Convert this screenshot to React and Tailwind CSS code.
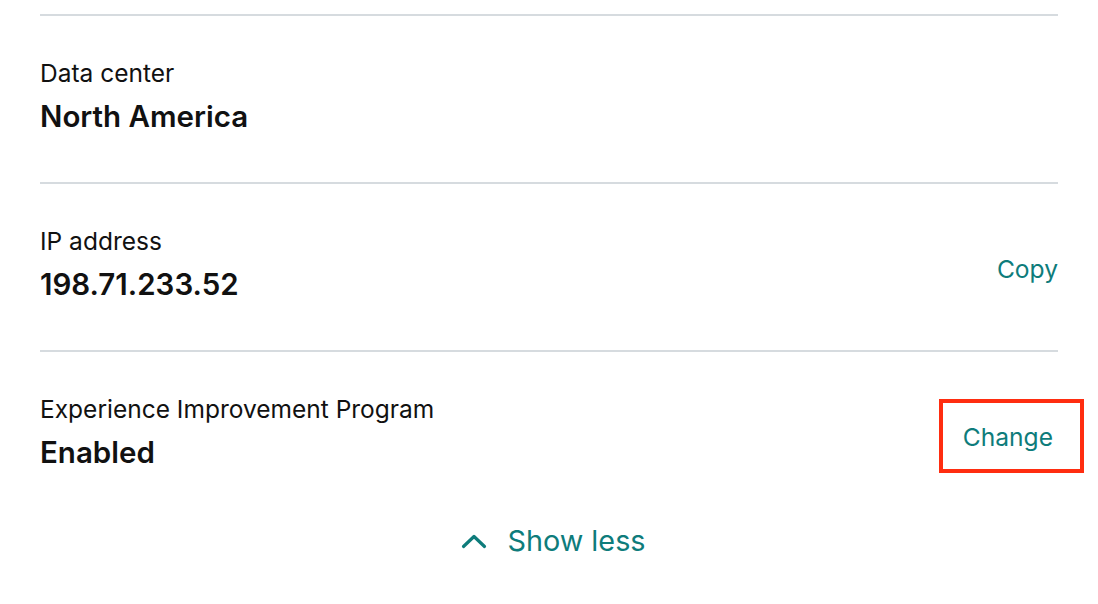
export default function App() {
  const font = { fontFamily: "Inter, 'Liberation Sans', sans-serif" };
  return (
    <div className="w-[1098px] h-[604px] bg-white overflow-hidden" style={font}>
      <div className="px-[40px] pt-[14px]">
        <Row label="Data center" value="North America" />
        <Row label="IP address" value="198.71.233.52" action="Copy" />
        <Row label="Experience Improvement Program" value="Enabled" action="Change" highlight />
        <div className="flex justify-center items-center gap-[20px] pt-[3px] pl-[9px] text-[#0e7c7b]">
          <svg width="26" height="16" viewBox="0 0 26 16" fill="none" stroke="currentColor" strokeWidth="3.2" strokeLinecap="round" strokeLinejoin="round">
            <path d="M2.5 13.5 L13 3.5 L23.5 13.5" />
          </svg>
          <span className="text-[28.8px] leading-[40px]">Show less</span>
        </div>
      </div>
    </div>
  );
}

function Row({ label, value, action, highlight }) {
  return (
    <div className="border-t-2 border-[#d6dbdf] h-[168px] pt-[41px] flex items-start justify-between">
      <div>
        <div className="text-[24.5px] leading-[32px] text-[#111111]">{label}</div>
        <div className="text-[29.5px] leading-[40px] font-semibold text-[#111111] mt-[7px]">{value}</div>
      </div>
      {action && (
        <div className="relative self-start mt-[28px]">
          <button className={`text-[24.6px] leading-[32px] text-[#0e7c7b] ${highlight ? "mr-[5px]" : ""}`}>{action}</button>
          {highlight && (
            <div className="absolute -left-[24px] -right-[26px] -top-[22px] -bottom-[20px] border-[4px] border-[#ff2d10]" />
          )}
        </div>
      )}
    </div>
  );
}
